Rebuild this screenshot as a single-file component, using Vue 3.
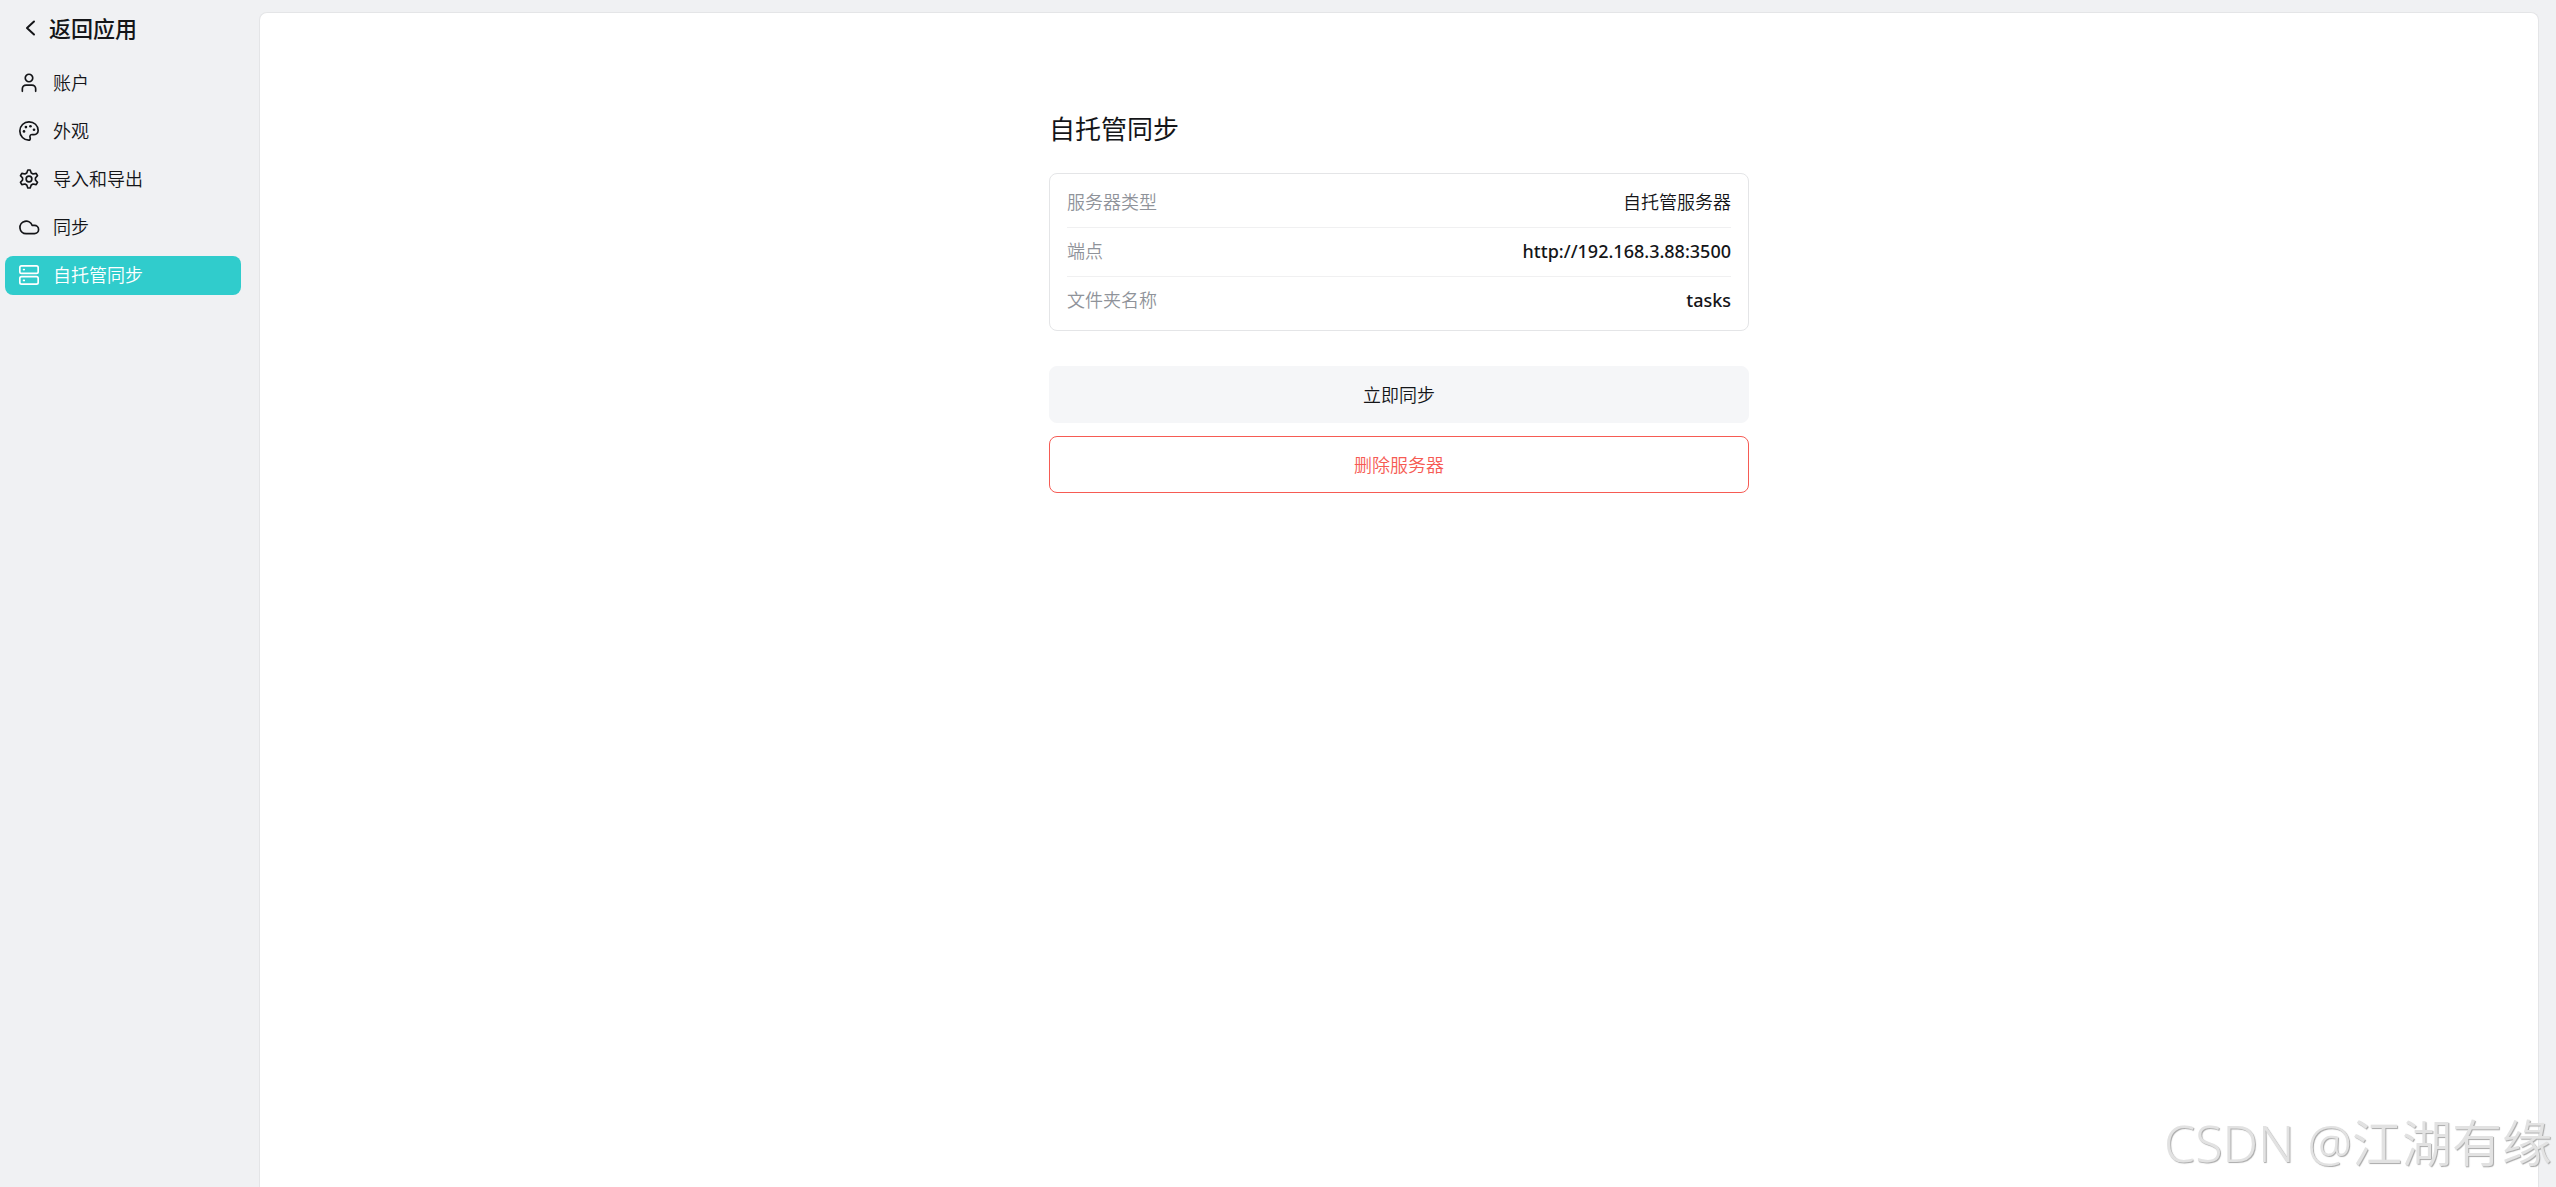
<template>
  <div class="settings">
    <aside class="sidebar">
      <a class="back" href="#app">
        <svg class="back-icon" viewBox="0 0 16 20">
          <path d="M11 3.5L4 10l7 6.5" />
        </svg>
        <span>返回应用</span>
      </a>
      <nav class="menu">
        <a
          v-for="item in menus"
          :key="item.key"
          class="menu-item"
          :class="{ active: item.key === current }"
          :href="'#' + item.key"
          @click.prevent="current = item.key"
        >
          <svg class="menu-icon" viewBox="0 0 24 24">
            <path v-for="d in item.paths" :key="d" :d="d" />
            <circle v-for="(c, i) in item.dots" :key="i" class="dot" :cx="c[0]" :cy="c[1]" r="1.6" />
          </svg>
          <span>{{ item.label }}</span>
        </a>
      </nav>
    </aside>

    <main class="panel">
      <section class="content">
        <h1 class="title">自托管同步</h1>
        <dl class="card">
          <div v-for="row in rows" :key="row.label" class="row">
            <dt>{{ row.label }}</dt>
            <dd :class="{ latin: row.latin }">{{ row.value }}</dd>
          </div>
        </dl>
        <div class="actions">
          <button type="button" class="btn">立即同步</button>
          <button type="button" class="btn danger">删除服务器</button>
        </div>
      </section>
    </main>

    <div class="watermark">CSDN @江湖有缘</div>
  </div>
</template>

<script setup>
import { ref } from 'vue';

const current = ref('self-hosted');

const menus = [
  {
    key: 'account',
    label: '账户',
    paths: [
      'M12 1.500a4.500 4.500 0 1 0 0 9a4.500 4.500 0 1 0 0-9z',
      'M4 22v-3a4.500 4.500 0 0 1 4.500-4.500h7a4.500 4.500 0 0 1 4.500 4.500v3',
    ],
  },
  {
    key: 'appearance',
    label: '外观',
    paths: [
      'M12 1C5.900 1 1 5.900 1 12s4.900 11 10.500 11c1.600 0 2.200-1 2-2.300c-.3-1.300-.7-2.200-.2-3.200c.5-1.200 1.600-1.400 3-1.200c3.700.5 6.700-1.200 6.700-5C23 5.300 18.100 1 12 1z',
    ],
    dots: [[6, 12.5], [8.3, 7.3], [13.7, 6.3], [18, 10.5]],
  },
  {
    key: 'transfer',
    label: '导入和导出',
    paths: [
      'M12 8.600a3.400 3.400 0 1 0 0 6.800a3.400 3.400 0 1 0 0-6.800z',
      'M10.600 1.200h2.800l1.300 3.500l2.200 1.300l3.700-.8l1.600 2.800l-2.500 2.800v2.400l2.500 2.800l-1.600 2.800l-3.700-.8l-2.200 1.300l-1.300 3.500h-2.800l-1.300-3.500l-2.200-1.300l-3.700.8l-1.600-2.800l2.500-2.800v-2.400l-2.500-2.800l1.600-2.800l3.700.8l2.200-1.300z',
    ],
  },
  {
    key: 'sync',
    label: '同步',
    paths: [
      'M18.500 20H8.500a7.500 7.500 0 1 1 7.200-10h2.800a5 5 0 0 1 0 10z',
    ],
  },
  {
    key: 'self-hosted',
    label: '自托管同步',
    paths: [
      'M3 1h18a2 2 0 0 1 2 2v5a2 2 0 0 1-2 2H3a2 2 0 0 1-2-2V3a2 2 0 0 1 2-2z',
      'M3 14h18a2 2 0 0 1 2 2v5a2 2 0 0 1-2 2H3a2 2 0 0 1-2-2v-5a2 2 0 0 1 2-2z',
      'M5.500 5.500h.8',
      'M5.500 18.500h.8',
    ],
  },
];

const rows = [
  { label: '服务器类型', value: '自托管服务器' },
  { label: '端点', value: 'http://192.168.3.88:3500', latin: true },
  { label: '文件夹名称', value: 'tasks', latin: true },
];
</script>

<style>
body {
  margin: 0;
  background: #f0f1f3;
}
</style>

<style scoped>
.settings {
  display: flex;
  min-height: 100vh;
  box-sizing: border-box;
  padding: 12px 17px 0 0;
  background: #f0f1f3;
  color: #141518;
  font-family: "Noto Sans", "Noto Sans CJK SC", sans-serif;
  font-size: 18px;
  font-weight: 350;
  line-height: 24px;
}

a {
  color: inherit;
  text-decoration: none;
}

svg {
  flex: none;
  fill: none;
  stroke: currentColor;
  stroke-width: 2;
  stroke-linecap: round;
  stroke-linejoin: round;
}

.sidebar {
  flex: none;
  width: 236px;
  padding: 0 18px 0 5px;
}

.back {
  display: flex;
  align-items: center;
  gap: 10px;
  height: 31px;
  padding-left: 18px;
  font-size: 22px;
  font-weight: 500;
}

.back-icon {
  width: 16px;
  height: 20px;
}

.menu {
  display: flex;
  flex-direction: column;
  gap: 9px;
  padding-top: 21px;
}

.menu-item {
  display: flex;
  align-items: center;
  gap: 14px;
  height: 38px;
  padding: 0 14px 1px;
  border-radius: 8px;
}

.menu-item.active {
  background: #30cccc;
  color: #fff;
}

.menu-icon {
  width: 20px;
  height: 20px;
  overflow: visible;
}

.dot {
  fill: currentColor;
  stroke: none;
}

/* 右侧内容区，底部延伸到窗口边缘 */
.panel {
  flex: 1;
  padding: 96px 24px 24px;
  border: 1px solid #e4e5e7;
  border-bottom: 0;
  border-radius: 8px 8px 0 0;
  background: #fff;
}

.content {
  max-width: 700px;
  margin: 0 auto;
}

.title {
  margin: 0 0 24px;
  font-size: 26px;
  font-weight: 400;
  line-height: 40px;
}

.card {
  margin: 0 0 35px;
  padding: 5px 17px;
  border: 1px solid #e4e5e7;
  border-radius: 8px;
}

.row {
  display: flex;
  align-items: center;
  justify-content: space-between;
  height: 46px;
  padding-bottom: 2px;
}

.row:not(:last-child) {
  border-bottom: 1px solid #f0f0f1;
}

.row dt {
  color: #8f939a;
}

.row dd {
  margin: 0;
}

.row .latin {
  font-weight: 500;
}

.actions {
  display: flex;
  flex-direction: column;
  gap: 13px;
}

.btn {
  height: 57px;
  border: 1px solid #f5f6f8;
  border-radius: 8px;
  background: #f5f6f8;
  color: inherit;
  font: inherit;
  cursor: pointer;
}

.btn.danger {
  border-color: #f65b54;
  background: #fff;
  color: #f65b54;
}

.watermark {
  position: fixed;
  right: 4px;
  bottom: 14px;
  color: #e2e2e2;
  font-family: "Noto Sans", "Noto Sans CJK SC", sans-serif;
  font-size: 50px;
  font-weight: 350;
  line-height: 60px;
  text-shadow: 1px 1px 1px #a8a8a8;
  pointer-events: none;
}
</style>
